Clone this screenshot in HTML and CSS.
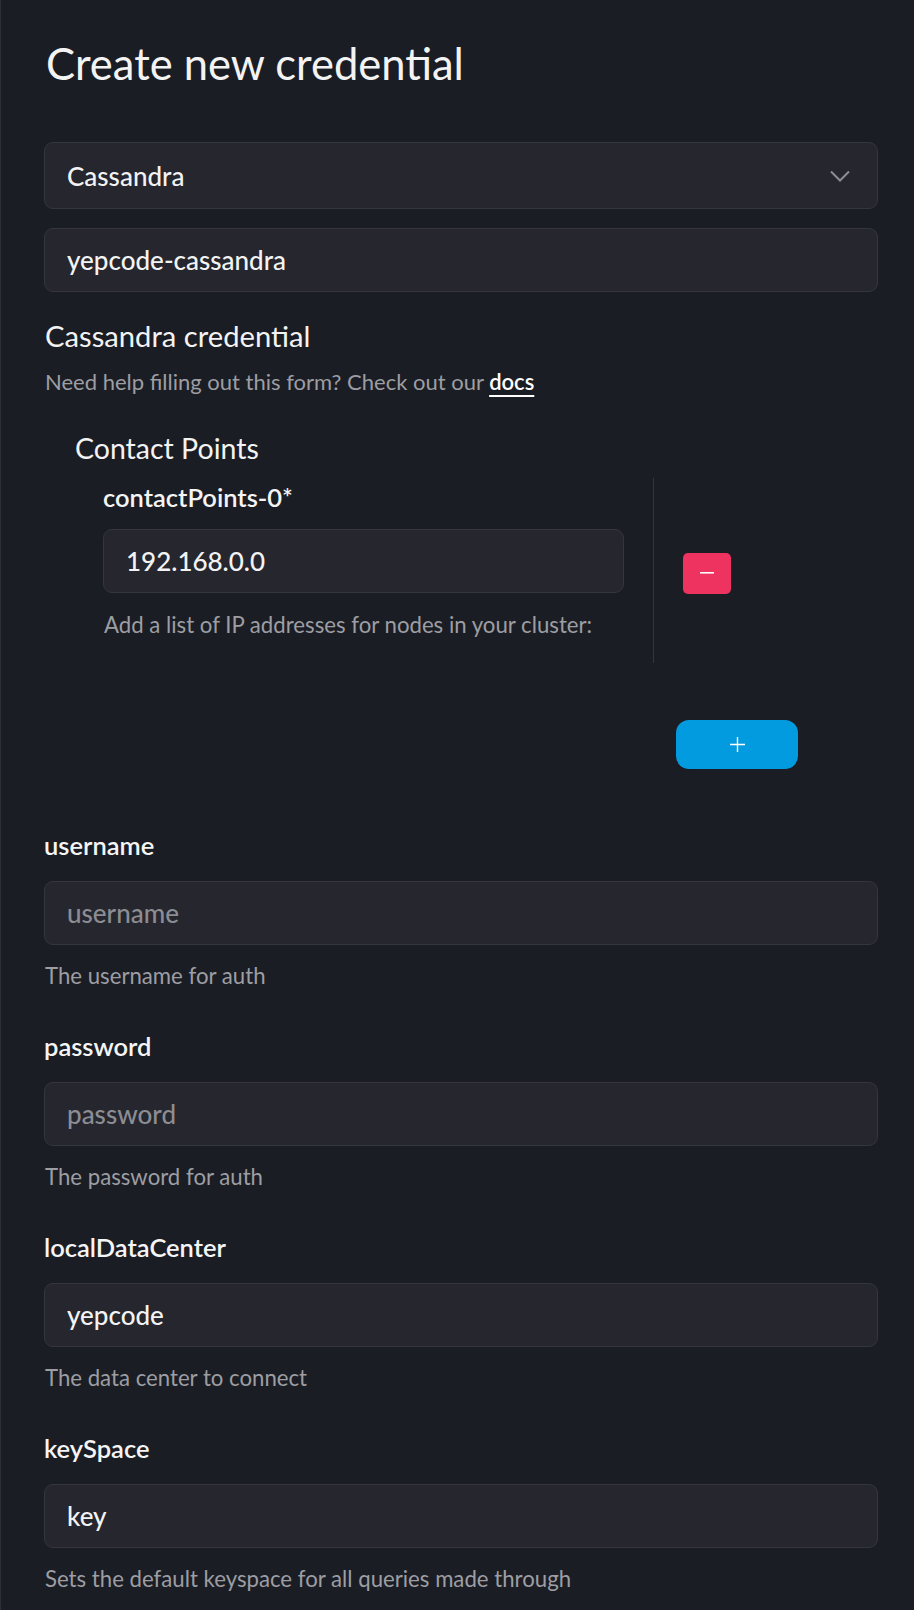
FILE: index.html
```html
<!DOCTYPE html>
<html lang="en">
<head>
<meta charset="utf-8">
<title>Create new credential</title>
<link rel="stylesheet" href="styles.css">
</head>
<body>
<main class="page">
  <h1 class="title">Create new credential</h1>

  <div class="select">
    <span class="select-value">Cassandra</span>
    <svg class="chevron" width="20" height="12" viewBox="0 0 20 12"><path d="M1 1.5 L10 10.5 L19 1.5" fill="none" stroke="#8d8e93" stroke-width="2"/></svg>
  </div>

  <input class="field-input name-input" type="text" value="yepcode-cassandra">

  <h2 class="section-title">Cassandra credential</h2>
  <p class="intro">Need help filling out this form? Check out our <a class="docs" href="#">docs</a></p>

  <section class="contact">
    <h3 class="contact-title">Contact Points</h3>
    <div class="contact-row">
      <div class="contact-item">
        <label class="label">contactPoints-0*</label>
        <input class="field-input" type="text" value="192.168.0.0">
        <p class="help">Add a list of IP addresses for nodes in your cluster:</p>
      </div>
      <div class="contact-actions">
        <button class="btn-remove" type="button" aria-label="remove">
          <svg width="14" height="2" viewBox="0 0 14 2"><rect x="0" y="0" width="14" height="1.6" fill="#fff"/></svg>
        </button>
      </div>
    </div>
    <div class="add-row">
      <button class="btn-add" type="button" aria-label="add">
        <svg width="15" height="15" viewBox="0 0 15 15"><path d="M7.5 0 V15 M0 7.5 H15" stroke="#fff" stroke-width="1.4" fill="none"/></svg>
      </button>
    </div>
  </section>

  <div class="field">
    <label class="label">username</label>
    <input class="field-input" type="text" placeholder="username">
    <p class="help">The username for auth</p>
  </div>

  <div class="field">
    <label class="label">password</label>
    <input class="field-input" type="text" placeholder="password">
    <p class="help">The password for auth</p>
  </div>

  <div class="field">
    <label class="label">localDataCenter</label>
    <input class="field-input" type="text" value="yepcode">
    <p class="help">The data center to connect</p>
  </div>

  <div class="field">
    <label class="label">keySpace</label>
    <input class="field-input" type="text" value="key">
    <p class="help">Sets the default keyspace for all queries made through</p>
  </div>
</main>
</body>
</html>
```

FILE: styles.css
```css
* { box-sizing: border-box; }

html, body {
  margin: 0;
  padding: 0;
  background: #1b1d24;
}

body {
  font-family: "Lato", "Noto Sans", "DejaVu Sans", sans-serif;
  color: #f3f3f4;
  min-height: 1610px;
  border-left: 1px solid #2f3037;
}

.page {
  padding: 0 36px 0 43px;
  display: flex;
  flex-direction: column;
}

.title {
  margin: 36px 0 52px 2px;
  font-size: 43.5px;
  line-height: 54px;
  font-weight: 400;
  letter-spacing: 0;
}

.select {
  height: 67px;
  display: flex;
  align-items: center;
  justify-content: space-between;
  padding: 0 27px 0 22px;
  background: #25262e;
  border: 1px solid #35363d;
  border-radius: 9px;
}

.select-value {
  font-size: 26px;
  font-weight: 500;
}

.chevron { display: block; }

.field-input {
  display: block;
  width: 100%;
  height: 64px;
  padding: 0 22px;
  background: #25262e;
  border: 1px solid #35363d;
  border-radius: 9px;
  color: #f3f3f4;
  font-family: inherit;
  font-size: 26px;
  font-weight: 500;
  outline: none;
}

.field-input::placeholder {
  color: #8c8d93;
  opacity: 1;
}

.name-input { margin-top: 19px; }

.section-title {
  margin: 27px 0 0 1px;
  font-size: 29.2px;
  line-height: 34px;
  font-weight: 400;
}

.intro {
  margin: 15px 0 0 1px;
  font-size: 22px;
  line-height: 28px;
  color: #9d9ea3;
}

.docs {
  color: #ffffff;
  font-weight: 600;
  text-decoration: underline;
  text-underline-offset: 5px;
  text-decoration-thickness: 2px;
}

.contact {
  padding-left: 30px;
  margin-top: 35px;
}

.contact-title {
  margin: 0 0 0 1px;
  font-size: 28.5px;
  line-height: 34px;
  font-weight: 400;
}

.contact-row {
  display: flex;
  align-items: center;
  margin-top: 13px;
}

.contact-item {
  width: 580px;
  padding: 5px 29px 0 29px;
  border-right: 1px solid #34353c;
  min-height: 185px;
}

.label {
  display: block;
  font-size: 25.5px;
  line-height: 28px;
  font-weight: 600;
  color: #f5f5f6;
  margin-bottom: 22px;
}

.contact-item .label {
  margin-bottom: 18px;
}

.help {
  margin: 18px 0 0 1px;
  font-size: 22.2px;
  line-height: 28px;
  color: #9d9ea3;
}

.field .help {
  margin-top: 17px;
}

.contact-actions {
  padding-left: 29px;
  padding-top: 5px;
}

.btn-remove {
  width: 48px;
  height: 41px;
  border: none;
  border-radius: 5px;
  background: #ef3360;
  display: flex;
  align-items: center;
  justify-content: center;
  padding: 0;
}

.add-row {
  display: flex;
  padding-left: 602px;
  margin-top: 57px;
}

.btn-add {
  width: 122px;
  height: 49px;
  border: none;
  border-radius: 13px;
  background: #039be0;
  display: flex;
  align-items: center;
  justify-content: center;
  padding: 0;
}

.field {
  margin-top: 62px;
}

.field + .field {
  margin-top: 42px;
}
```
